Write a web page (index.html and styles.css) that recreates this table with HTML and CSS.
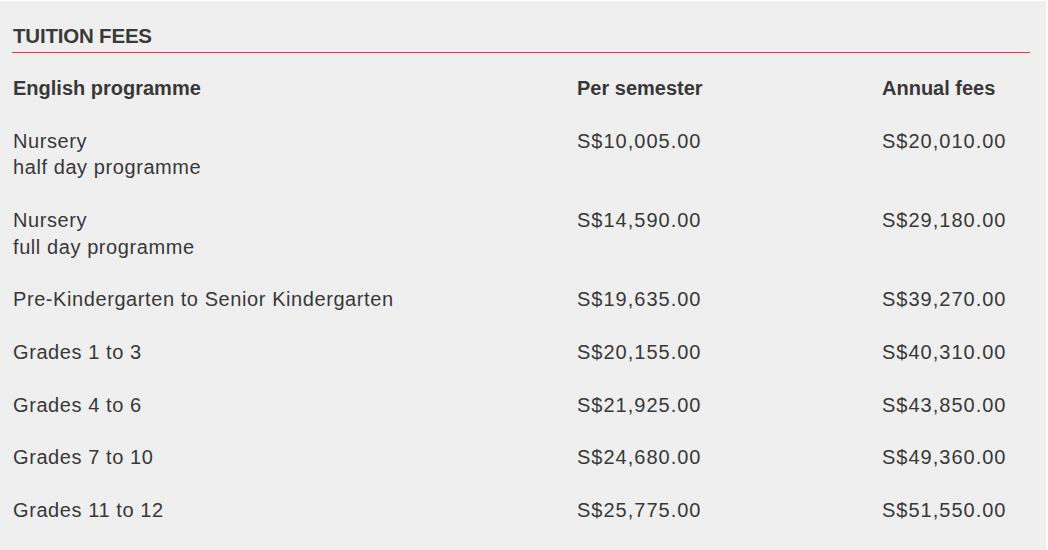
FILE: index.html
```html
<!DOCTYPE html>
<html lang="en">
<head>
<meta charset="utf-8">
<title>Tuition fees</title>
<link rel="stylesheet" href="styles.css">
</head>
<body>
<div class="page">
  <section class="fees">
    <h2 class="fees-title">TUITION FEES</h2>
    <div class="fees-table">
      <div class="row head">
        <div class="cell label">English programme</div>
        <div class="cell price">Per semester</div>
        <div class="cell price">Annual fees</div>
      </div>
      <div class="row">
        <div class="cell label">Nursery<br>half day programme</div>
        <div class="cell price">S$10,005.00</div>
        <div class="cell price">S$20,010.00</div>
      </div>
      <div class="row">
        <div class="cell label">Nursery<br>full day programme</div>
        <div class="cell price">S$14,590.00</div>
        <div class="cell price">S$29,180.00</div>
      </div>
      <div class="row">
        <div class="cell label">Pre-Kindergarten to Senior Kindergarten</div>
        <div class="cell price">S$19,635.00</div>
        <div class="cell price">S$39,270.00</div>
      </div>
      <div class="row">
        <div class="cell label">Grades 1 to 3</div>
        <div class="cell price">S$20,155.00</div>
        <div class="cell price">S$40,310.00</div>
      </div>
      <div class="row">
        <div class="cell label">Grades 4 to 6</div>
        <div class="cell price">S$21,925.00</div>
        <div class="cell price">S$43,850.00</div>
      </div>
      <div class="row">
        <div class="cell label">Grades 7 to 10</div>
        <div class="cell price">S$24,680.00</div>
        <div class="cell price">S$49,360.00</div>
      </div>
      <div class="row">
        <div class="cell label">Grades 11 to 12</div>
        <div class="cell price">S$25,775.00</div>
        <div class="cell price">S$51,550.00</div>
      </div>
    </div>
  </section>
</div>
</body>
</html>
```

FILE: styles.css
```css
html, body {
  margin: 0;
  padding: 0;
  background: #ffffff;
}

body {
  font-family: "Liberation Sans", Arial, sans-serif;
  color: #383838;
}

.page {
  margin: 1px 2px 0 0;
  height: 549px;
  background: #efefef;
  overflow: hidden;
}

.fees {
  padding: 23px 16px 0 12px;
}

.fees-title {
  margin: 0;
  padding: 0 0 4px 1px;
  font-size: 20.5px;
  line-height: 24px;
  font-weight: 700;
  letter-spacing: -0.2px;
  color: #3a3a3a;
  border-bottom: 1px solid #f0303a;
}

.fees-table {
  margin-top: 22px;
  padding-left: 1px;
}

.row {
  display: grid;
  grid-template-columns: 564px 305px 1fr;
  padding-bottom: 26px;
  font-size: 20px;
  line-height: 26.67px;
}

.cell {
  letter-spacing: 0.58px;
}

.cell.price {
  letter-spacing: 1px;
}

.row.head .cell {
  font-weight: 700;
  letter-spacing: 0;
}
```
